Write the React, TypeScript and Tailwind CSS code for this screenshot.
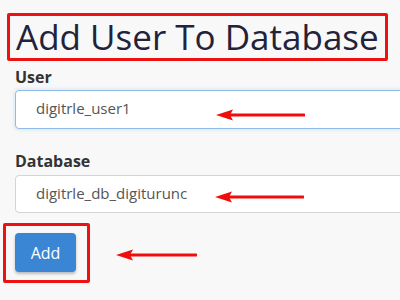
import React from "react";

function Arrow({ x1, x2, y }: { x1: number; x2: number; y: number }) {
  return (
    <svg
      className="absolute pointer-events-none"
      style={{ left: x1, top: y - 7, width: x2 - x1, height: 14 }}
      viewBox={`0 0 ${x2 - x1} 14`}
    >
      <line x1={14} y1={7} x2={x2 - x1 - 1} y2={7} stroke="#f20d0d" strokeWidth={3} strokeLinecap="round" />
      <polygon points={`0,7 17,1.5 14,7 17,12.5`} fill="#f20d0d" />
    </svg>
  );
}

export default function App() {
  return (
    <div
      className="relative w-[400px] h-[300px] overflow-hidden bg-[#f8f8f8]"
      style={{ fontFamily: '"Open Sans", "Liberation Sans", sans-serif' }}
    >
      <div className="flex flex-col pl-[15px] pt-[13px]">
        <div className="-ml-[8px] w-[381px] h-[48px] border-[3px] border-[#ee1111] rounded-[2px] flex items-center pl-[6px]">
          <h1 className="text-[35px] leading-none font-normal text-[#22223a] -mt-[1px] whitespace-nowrap">
            Add User To Database
          </h1>
        </div>
        <label className="mt-[6px] text-[16px] font-bold text-[#333] leading-[20px] h-[20px]">User</label>
        <div className="mt-[3px] h-[39px] w-[420px] rounded-[4px] border border-[#8fbbe8] bg-white flex items-center pl-[20px] shadow-[0_0_4px_rgba(102,175,233,0.35)]">
          <span className="text-[15px] text-[#555] -mt-[2px]">digitrle_user1</span>
        </div>
        <label className="mt-[22px] text-[16px] font-bold text-[#333] leading-[20px] h-[20px]">Database</label>
        <div className="mt-[4px] h-[38px] w-[420px] rounded-[4px] border border-[#d4d4d4] bg-white flex items-center pl-[20px]">
          <span className="text-[15px] text-[#555] -mt-[2px]">digitrle_db_digiturunc</span>
        </div>
        <div className="mt-[10px] -ml-[12px] w-[87px] h-[60px] border-[3px] border-[#ee1111] rounded-[2px] flex items-start pl-[9px] pt-[7px]">
          <button className="w-[61px] h-[39px] rounded-[4px] bg-[#3a86d5] text-white text-[16px] shadow-[0_2px_3px_rgba(0,0,0,0.25)] flex items-center justify-center">
            Add
          </button>
        </div>
      </div>
      <Arrow x1={216} x2={305} y={115} />
      <Arrow x1={215} x2={304} y={197} />
      <Arrow x1={116} x2={197} y={255} />
    </div>
  );
}
